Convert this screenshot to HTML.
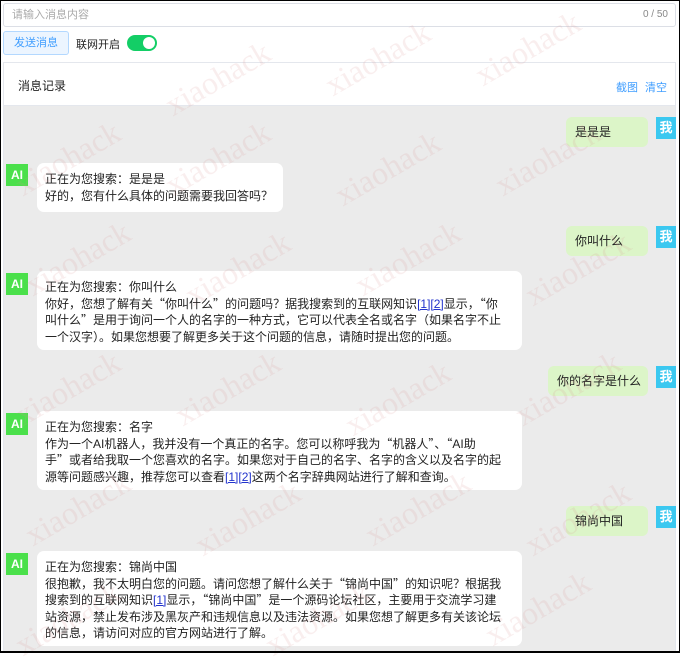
<!DOCTYPE html>
<html><head><meta charset="utf-8"><style>
*{margin:0;padding:0;box-sizing:border-box}
body{width:680px;height:653px;position:relative;overflow:hidden;background:#fff;font-family:"Liberation Sans","Noto Sans CJK SC",sans-serif;font-size:12px;color:#222}
.frame{position:absolute;left:0;top:0;width:680px;height:653px;border:1px solid #000;border-bottom-width:2px;z-index:50;pointer-events:none}
.abs{position:absolute}
.inp{left:3px;top:3px;width:673px;height:24px;border:1px solid #dcdfe6;border-radius:3px;color:#aaa;font-size:11px;line-height:22px;padding-left:8px}
.cnt{right:12px;top:3px;line-height:24px;color:#888;font-size:10px}
.btn{left:3px;top:31px;width:66px;height:24px;background:#ecf5ff;border:1px solid #b3d8ff;border-radius:3px;color:#409eff;text-align:center;line-height:22px;font-size:11px}
.sw{left:127px;top:35px;width:30px;height:16px;background:#13ce66;border-radius:8px}
.sw:after{content:"";position:absolute;right:2px;top:2px;width:12px;height:12px;border-radius:50%;background:#fff}
.panel{left:3px;top:62px;width:673px;height:591px;border:1px solid #e4e7ed;background:#ebebeb}
.head{left:4px;top:63px;width:671px;height:43px;background:#fff;border-bottom:1px solid #e4e7ed}
.link{color:#409eff;font-size:11px}
.me{background:#dcf5c8;border-radius:6px;height:30px;line-height:30px;padding-left:9px;white-space:nowrap}
.mav{left:656px;width:20px;height:22px;background:#3bc8f0;color:#fff;font-weight:bold;text-align:center;line-height:22px;font-size:13px}
.aav{left:6px;width:22px;height:22px;background:#4be04b;color:#fff;font-weight:bold;text-align:center;line-height:22px;font-size:12px}
.ai{left:37px;background:#fff;border-radius:7px;padding:8px 8px;line-height:16.5px;white-space:nowrap}
.ai a{color:#2233cc;text-decoration:underline}
.q{font-family:"Noto Sans CJK SC",sans-serif}
.wm{position:absolute;font-family:"Liberation Serif",serif;font-size:32px;color:rgba(220,150,150,0.16);transform:rotate(-30deg);z-index:40;white-space:nowrap;pointer-events:none}
</style></head><body>
<div class="abs inp">请输入消息内容</div>
<div class="abs cnt">0 / 50</div>
<div class="abs btn">发送消息</div>
<div class="abs" style="left:76px;top:36px;font-size:11px">联网开启</div>
<div class="abs sw"></div>
<div class="abs panel"></div>
<div class="abs head"></div>
<div class="abs" style="left:18px;top:77px">消息记录</div>
<div class="abs link" style="left:616px;top:79px">截图</div>
<div class="abs link" style="left:645px;top:79px">清空</div>

<div class="abs me" style="left:566px;top:117px;width:82px">是是是</div>
<div class="abs mav" style="top:117px">我</div>
<div class="abs aav" style="top:164px">AI</div>
<div class="abs ai" style="top:163px;width:246px">正在为您搜索：是是是<br>好的，您有什么具体的问题需要我回答吗？</div>

<div class="abs me" style="left:566px;top:226px;width:82px">你叫什么</div>
<div class="abs mav" style="top:226px">我</div>
<div class="abs aav" style="top:273px">AI</div>
<div class="abs ai" style="top:271px;width:485px;height:79px">正在为您搜索：你叫什么<br>你好，您想了解有关<span class="q">“</span>你叫什么<span class="q">”</span>的问题吗？据我搜索到的互联网知识<a>[1]</a><a>[2]</a>显示，<span class="q">“</span>你<br>叫什么<span class="q">”</span>是用于询问一个人的名字的一种方式，它可以代表全名或名字（如果名字不止<br>一个汉字）。如果您想要了解更多关于这个问题的信息，请随时提出您的问题。</div>

<div class="abs me" style="left:548px;top:366px;width:100px">你的名字是什么</div>
<div class="abs mav" style="top:366px">我</div>
<div class="abs aav" style="top:413px">AI</div>
<div class="abs ai" style="top:411px;width:485px;height:79px">正在为您搜索：名字<br>作为一个AI机器人，我并没有一个真正的名字。您可以称呼我为<span class="q">“</span>机器人<span class="q">”</span>、<span class="q">“</span>AI助<br>手<span class="q">”</span>或者给我取一个您喜欢的名字。如果您对于自己的名字、名字的含义以及名字的起<br>源等问题感兴趣，推荐您可以查看<a>[1]</a><a>[2]</a>这两个名字辞典网站进行了解和查询。</div>

<div class="abs me" style="left:566px;top:506px;width:82px">锦尚中国</div>
<div class="abs mav" style="top:506px">我</div>
<div class="abs aav" style="top:553px">AI</div>
<div class="abs ai" style="top:551px;width:485px;height:95px">正在为您搜索：锦尚中国<br>很抱歉，我不太明白您的问题。请问您想了解什么关于<span class="q">“</span>锦尚中国<span class="q">”</span>的知识呢？根据我<br>搜索到的互联网知识<a>[1]</a>显示，<span class="q">“</span>锦尚中国<span class="q">”</span>是一个源码论坛社区，主要用于交流学习建<br>站资源，禁止发布涉及黑灰产和违规信息以及违法资源。如果您想了解更多有关该论坛<br>的信息，请访问对应的官方网站进行了解。</div>

<div class="wm" style="left:160px;top:60px">xiaohack</div>
<div class="wm" style="left:320px;top:40px">xiaohack</div>
<div class="wm" style="left:470px;top:30px">xiaohack</div>
<div class="wm" style="left:10px;top:140px">xiaohack</div>
<div class="wm" style="left:160px;top:140px">xiaohack</div>
<div class="wm" style="left:330px;top:150px">xiaohack</div>
<div class="wm" style="left:490px;top:140px">xiaohack</div>
<div class="wm" style="left:20px;top:240px">xiaohack</div>
<div class="wm" style="left:180px;top:250px">xiaohack</div>
<div class="wm" style="left:350px;top:240px">xiaohack</div>
<div class="wm" style="left:520px;top:250px">xiaohack</div>
<div class="wm" style="left:10px;top:370px">xiaohack</div>
<div class="wm" style="left:170px;top:370px">xiaohack</div>
<div class="wm" style="left:340px;top:380px">xiaohack</div>
<div class="wm" style="left:510px;top:370px">xiaohack</div>
<div class="wm" style="left:20px;top:490px">xiaohack</div>
<div class="wm" style="left:190px;top:500px">xiaohack</div>
<div class="wm" style="left:360px;top:490px">xiaohack</div>
<div class="wm" style="left:520px;top:500px">xiaohack</div>
<div class="wm" style="left:10px;top:600px">xiaohack</div>
<div class="wm" style="left:260px;top:600px">xiaohack</div>
<div class="wm" style="left:480px;top:590px">xiaohack</div>
<div class="frame"></div>
</body></html>
